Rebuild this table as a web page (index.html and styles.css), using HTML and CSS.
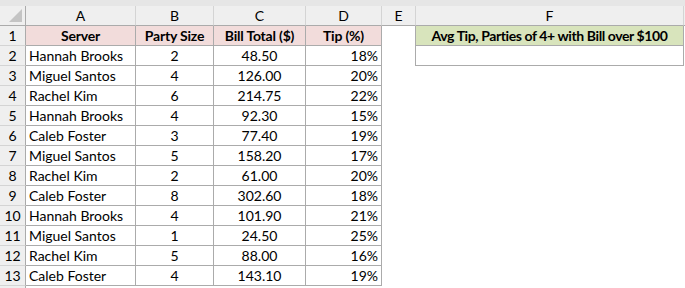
FILE: index.html
```html
<!DOCTYPE html>
<html>
<head>
<meta charset="utf-8">
<link rel="stylesheet" href="styles.css">
</head>
<body>
<div class="topstrip"></div>
<div class="sheet">
  <div class="row colhead">
    <div class="c rh corner"><span class="tri"></span></div>
    <div class="c a">A</div><div class="c b">B</div><div class="c cc">C</div><div class="c d">D</div><div class="c e">E</div><div class="c f">F</div><div class="c g"></div>
  </div>
  <div class="row">
    <div class="c rh">1</div>
    <div class="c a cell hdr ctr">Server</div>
    <div class="c b cell hdr ctr">Party Size</div>
    <div class="c cc cell hdr ctr">Bill Total ($)</div>
    <div class="c d cell hdr ctr">Tip (%)</div>
    <div class="c e blank"></div>
    <div class="c f cell green ctr">Avg Tip, Parties of 4+ with Bill over $100</div>
  </div>
  <div class="row">
    <div class="c rh">2</div>
    <div class="c a cell">Hannah Brooks</div><div class="c b cell ctr">2</div><div class="c cc cell ctr">48.50</div><div class="c d cell rt">18%</div>
    <div class="c e blank"></div>
    <div class="c f cell"></div>
  </div>
  <div class="row"><div class="c rh">3</div><div class="c a cell">Miguel Santos</div><div class="c b cell ctr">4</div><div class="c cc cell ctr">126.00</div><div class="c d cell rt">20%</div></div>
  <div class="row"><div class="c rh">4</div><div class="c a cell">Rachel Kim</div><div class="c b cell ctr">6</div><div class="c cc cell ctr">214.75</div><div class="c d cell rt">22%</div></div>
  <div class="row"><div class="c rh">5</div><div class="c a cell">Hannah Brooks</div><div class="c b cell ctr">4</div><div class="c cc cell ctr">92.30</div><div class="c d cell rt">15%</div></div>
  <div class="row"><div class="c rh">6</div><div class="c a cell">Caleb Foster</div><div class="c b cell ctr">3</div><div class="c cc cell ctr">77.40</div><div class="c d cell rt">19%</div></div>
  <div class="row"><div class="c rh">7</div><div class="c a cell">Miguel Santos</div><div class="c b cell ctr">5</div><div class="c cc cell ctr">158.20</div><div class="c d cell rt">17%</div></div>
  <div class="row"><div class="c rh">8</div><div class="c a cell">Rachel Kim</div><div class="c b cell ctr">2</div><div class="c cc cell ctr">61.00</div><div class="c d cell rt">20%</div></div>
  <div class="row"><div class="c rh">9</div><div class="c a cell">Caleb Foster</div><div class="c b cell ctr">8</div><div class="c cc cell ctr">302.60</div><div class="c d cell rt">18%</div></div>
  <div class="row"><div class="c rh">10</div><div class="c a cell">Hannah Brooks</div><div class="c b cell ctr">4</div><div class="c cc cell ctr">101.90</div><div class="c d cell rt">21%</div></div>
  <div class="row"><div class="c rh">11</div><div class="c a cell">Miguel Santos</div><div class="c b cell ctr">1</div><div class="c cc cell ctr">24.50</div><div class="c d cell rt">25%</div></div>
  <div class="row"><div class="c rh">12</div><div class="c a cell">Rachel Kim</div><div class="c b cell ctr">5</div><div class="c cc cell ctr">88.00</div><div class="c d cell rt">16%</div></div>
  <div class="row"><div class="c rh">13</div><div class="c a cell">Caleb Foster</div><div class="c b cell ctr">4</div><div class="c cc cell ctr">143.10</div><div class="c d cell rt">19%</div></div>
  <div class="row tail"><div class="c rh"></div></div>
</div>
</body>
</html>
```
FILE: styles.css
```css
html, body {
  margin: 0;
  padding: 0;
  background: #ffffff;
}
body {
  font-family: "Lato", "Liberation Sans", sans-serif;
  font-size: 14px;
  color: #000;
  width: 685px;
  height: 288px;
  overflow: hidden;
}
.topstrip {
  height: 6px;
  background: #e6e6e6;
}
.sheet {
  display: flex;
  flex-direction: column;
}
.row {
  display: flex;
  height: 20px;
}
.row.tail {
  height: 2px;
}
.tail .c {
  height: 2px;
  border-bottom: none;
}
.c {
  box-sizing: border-box;
  height: 20px;
  line-height: 20px;
  flex: none;
  white-space: nowrap;
  overflow: hidden;
}
.rh {
  width: 26px;
  background: #efefef;
  border-right: 1px solid #ababab;
  border-bottom: 1px solid #d4d4d4;
  text-align: center;
}
.a { width: 110px; }
.b { width: 78px; }
.cc { width: 92px; }
.d { width: 76px; }
.e { width: 34px; }
.f { width: 268px; }
.g { flex: 1; }
.colhead .c {
  background: #efefef;
  border-right: 1px solid #d4d4d4;
  border-bottom: 1px solid #ababab;
  text-align: center;
}
.colhead .rh {
  border-right: 1px solid #ababab;
}
.colhead .g {
  border-right: none;
}
.corner {
  position: relative;
}
.tri {
  position: absolute;
  right: 3px;
  bottom: 3px;
  width: 0;
  height: 0;
  border-left: 13px solid transparent;
  border-bottom: 13px solid #c4c4c4;
}
.cell {
  border-right: 1px solid #ababab;
  border-bottom: 1px solid #ababab;
  padding: 0 3px;
}
.hdr {
  background: #f2dcdb;
  font-weight: bold;
  letter-spacing: -0.2px;
}
.green {
  background: #d8e4bc;
  font-weight: bold;
  letter-spacing: -0.4px;
}
.f.cell {
  border-left: 1px solid #ababab;
  margin-left: -1px;
  width: 269px;
}
.ctr { text-align: center; }
.rt { text-align: right; }
.blank { background: #fff; }
```
